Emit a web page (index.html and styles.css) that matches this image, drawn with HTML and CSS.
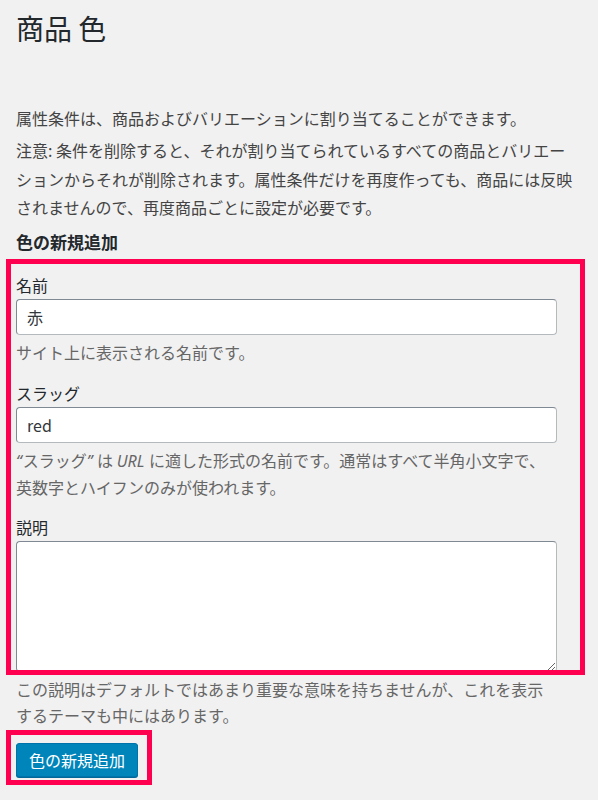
FILE: index.html
```html
<!DOCTYPE html>
<html lang="ja">
<head>
<meta charset="utf-8">
<title>商品 色</title>
<link rel="stylesheet" href="styles.css">
</head>
<body>
<div class="wrap">
  <h1 class="page-title">商品 色</h1>
  <p class="intro">属性条件は、商品およびバリエーションに割り当てることができます。</p>
  <p class="note">注意: 条件を削除すると、それが割り当てられているすべての商品とバリエーションからそれが削除されます。属性条件だけを再度作っても、商品には反映されませんので、再度商品ごとに設定が必要です。</p>
  <h2 class="form-title">色の新規追加</h2>
  <form class="add-form">
    <div class="field field-first">
      <label class="field-label" for="tag-name">名前</label>
      <input class="text-input" id="tag-name" type="text" value="赤">
      <p class="description">サイト上に表示される名前です。</p>
    </div>
    <div class="field">
      <label class="field-label" for="tag-slug">スラッグ</label>
      <input class="text-input" id="tag-slug" type="text" value="red">
      <p class="description"><i class="latin">“</i>スラッグ<i class="latin">”</i> は <i class="latin">URL</i> に適した形式の名前です。通常はすべて半角小文字で、英数字とハイフンのみが使われます。</p>
    </div>
    <div class="field field-desc">
      <label class="field-label" for="tag-description">説明</label>
      <textarea class="text-area" id="tag-description"></textarea>
      <p class="description">この説明はデフォルトではあまり重要な意味を持ちませんが、これを表示するテーマも中にはあります。</p>
    </div>
    <div class="submit">
      <button class="button-primary" type="button">色の新規追加</button>
    </div>
  </form>
</div>
<div class="highlight highlight-form"></div>
<div class="highlight highlight-button"></div>
</body>
</html>
```

FILE: styles.css
```css
html, body {
  margin: 0;
  padding: 0;
  background: #f1f1f1;
}

body {
  position: relative;
  min-height: 800px;
  font-family: "Noto Sans CJK JP", "Noto Sans", sans-serif;
  color: #444;
  font-size: 16px;
}

.wrap {
  padding: 10px 0 0 16px;
  width: 562px;
}

.page-title {
  margin: 0;
  font-size: 28px;
  font-weight: 400;
  line-height: 36px;
  color: #23282d;
}

.intro {
  margin: 58px 0 0;
  line-height: 28px;
}

.note {
  margin: 4px 0 0;
  line-height: 28.5px;
}

.form-title {
  margin: 8px 0 0;
  font-size: 17px;
  font-weight: 700;
  line-height: 24px;
  color: #23282d;
}

.add-form {
  width: 541px;
}

.field {
  margin-top: 16px;
}

.field-first {
  margin-top: 19px;
}

.field-desc {
  margin-top: 15px;
}

.field-label {
  display: block;
  line-height: 24px;
  margin-bottom: 2px;
  color: #23282d;
}

.text-input,
.text-area {
  display: block;
  box-sizing: border-box;
  width: 541px;
  margin: 0;
  border: 1px solid;
  border-color: #7e8993 #b4b9be #b4b9be #7e8993;
  border-radius: 4px;
  background: #fff;
  font-family: "Noto Sans CJK JP", "Noto Sans", sans-serif;
  font-size: 16px;
  color: #32373c;
}

.text-input {
  height: 36px;
  padding: 0 10px;
}

.field:not(.field-first) .text-input {
  margin-top: 1px;
}

.text-area {
  height: 131px;
  padding: 6px 10px;
  resize: vertical;
}

.description {
  margin: 5px 0 0;
  line-height: 25.5px;
  color: #666;
}

.description .latin {
  font-family: "Noto Sans", "Liberation Sans", sans-serif;
  font-style: italic;
  padding-right: 1px;
}

.submit {
  margin-top: 15px;
}

.button-primary {
  display: inline-block;
  height: 34px;
  padding: 0 12px;
  border: 1px solid #0073aa;
  border-radius: 3px;
  background: #0085ba;
  box-shadow: 0 1px 0 #006799;
  color: #fff;
  font-family: "Noto Sans CJK JP", "Noto Sans", sans-serif;
  font-size: 16px;
  line-height: 32px;
  cursor: pointer;
}

.highlight {
  position: absolute;
  box-sizing: border-box;
  border: 5px solid #ff0050;
  pointer-events: none;
}

.highlight-form {
  left: 6px;
  top: 259px;
  width: 579px;
  height: 416px;
}

.highlight-button {
  left: 6px;
  top: 730px;
  width: 146px;
  height: 55px;
}
```
